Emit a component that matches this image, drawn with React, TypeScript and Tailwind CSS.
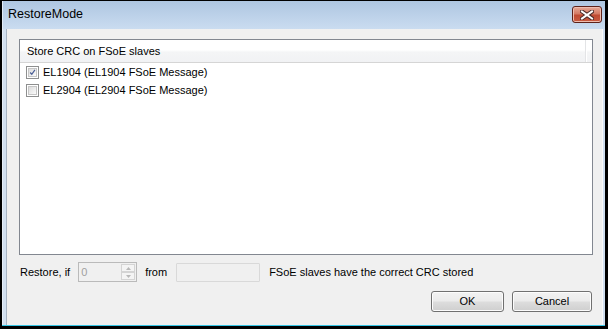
import React from 'react';

const font = { fontFamily: '"Liberation Sans", Arial, sans-serif' };

function CheckBox({ checked }: { checked: boolean }) {
  return (
    <div className="w-[13px] h-[13px] border border-[#8e8f8f] bg-white p-[1px] shrink-0">
      <div className="relative w-full h-full border border-[#c6c6c6] bg-gradient-to-br from-[#dcdcdc] to-[#fbfbfb]">
        {checked && (
          <svg viewBox="0 0 9 9" className="absolute inset-0 w-full h-full">
            <path d="M1.5 4.5 L3.6 6.8 L7.6 1.2" fill="none" stroke="#4b5f96" strokeWidth="1.6" />
          </svg>
        )}
      </div>
    </div>
  );
}

function Button({ label, width }: { label: string; width: string }) {
  return (
    <div
      className={`${width} h-[21px] rounded-[3px] border border-[#707070] flex items-center justify-center text-[11px] text-black bg-[linear-gradient(#f2f2f2_0%,#ebebeb_48%,#dddddd_52%,#cfcfcf_100%)] shadow-[inset_0_0_0_1px_#fcfcfc]`}
    >
      {label}
    </div>
  );
}

export default function App() {
  return (
    <div className="w-[608px] h-[329px] bg-black pt-px pl-[2px] pr-[3px] pb-[3px] flex flex-col" style={font}>
      <div className="flex-1 flex flex-col border-b border-[#35c6e6]">
        {/* title bar */}
        <div className="h-[28px] shrink-0 flex items-start justify-between bg-gradient-to-b from-[#aec6e1] to-[#cadcf0] border-l border-[#e2ebf5]">
          <span className="pl-[5px] pt-[7px] text-[12.5px] text-black leading-none">RestoreMode</span>
          <div className="mt-[5px] mr-[3px] w-[30px] h-[17px] rounded-[3px] border border-[#5e2219] bg-[linear-gradient(#e6a997_0%,#d47a64_45%,#c04a32_55%,#c85c42_100%)] shadow-[inset_0_0_0_1px_#eebcae] flex items-center justify-center">
            <svg width="14" height="10" viewBox="0 0 14 10">
              <path d="M2 1.5 L12 8.5 M12 1.5 L2 8.5" stroke="#4a2a28" strokeWidth="4" strokeLinecap="square" />
              <path d="M2 1.5 L12 8.5 M12 1.5 L2 8.5" stroke="#ffffff" strokeWidth="2" strokeLinecap="square" />
            </svg>
          </div>
        </div>

        {/* body with frame */}
        <div className="flex-1 flex">
          <div className="w-[4px] bg-[#d2e0f0] border-l border-[#e6eef7]" />
          <div className="flex-1 flex flex-col bg-[#f0f0f0] border-l border-[#a7b4c3] border-r border-r-[#fbfbfb] text-[11px] text-black">
            {/* list view */}
            <div className="mt-[10px] ml-[12px] mr-[9px] h-[216px] border border-[#828790] bg-white flex flex-col">
              <div className="h-[23px] shrink-0 flex border-b border-[#d5d5d5] bg-[linear-gradient(#ffffff_0%,#ffffff_45%,#f4f5f6_55%,#f1f2f4_100%)]">
                <div className="flex-1 flex items-center pl-[7px] border-r border-[#e3e4e6]">Store CRC on FSoE slaves</div>
                <div className="w-[6px] border-l border-[#ffffff]" />
              </div>
              <div className="flex flex-col pl-[6px]">
                <div className="h-[18px] flex items-center gap-[4px]">
                  <CheckBox checked />
                  <span>EL1904 (EL1904 FSoE Message)</span>
                </div>
                <div className="h-[18px] flex items-center gap-[4px]">
                  <CheckBox checked={false} />
                  <span>EL2904 (EL2904 FSoE Message)</span>
                </div>
              </div>
            </div>

            {/* restore row */}
            <div className="mt-[7px] ml-[13px] h-[20px] flex items-center">
              <span>Restore, if</span>
              <div className="ml-[8px] w-[59px] h-[20px] border border-[#bababa] bg-[#f0f0f0] flex items-stretch">
                <span className="flex-1 pl-[2px] flex items-center text-[#a0a0a0]">0</span>
                <div className="w-[16px] flex flex-col p-[1px] gap-0">
                  <div className="flex-1 border border-[#d4d4d4] bg-[#f4f4f4] flex items-center justify-center">
                    <svg width="5" height="3" viewBox="0 0 5 3"><path d="M0 3 L2.5 0 L5 3 Z" fill="#b8b8b8" /></svg>
                  </div>
                  <div className="flex-1 border border-[#d4d4d4] bg-[#f4f4f4] flex items-center justify-center">
                    <svg width="5" height="3" viewBox="0 0 5 3"><path d="M0 0 L2.5 3 L5 0 Z" fill="#b8b8b8" /></svg>
                  </div>
                </div>
              </div>
              <span className="ml-[8px]">from</span>
              <div className="ml-[9px] w-[84px] h-[19px] border border-[#d9d9d9] bg-[#f0f0f0] rounded-[1px]" />
              <span className="ml-[9px]">FSoE slaves have the correct CRC stored</span>
            </div>

            {/* buttons */}
            <div className="mt-[9px] mr-[10px] flex justify-end gap-[8px]">
              <Button label="OK" width="w-[73px]" />
              <Button label="Cancel" width="w-[80px]" />
            </div>
          </div>
          <div className="w-[2px] bg-[#d2e0f0]" />
        </div>
      </div>
    </div>
  );
}
